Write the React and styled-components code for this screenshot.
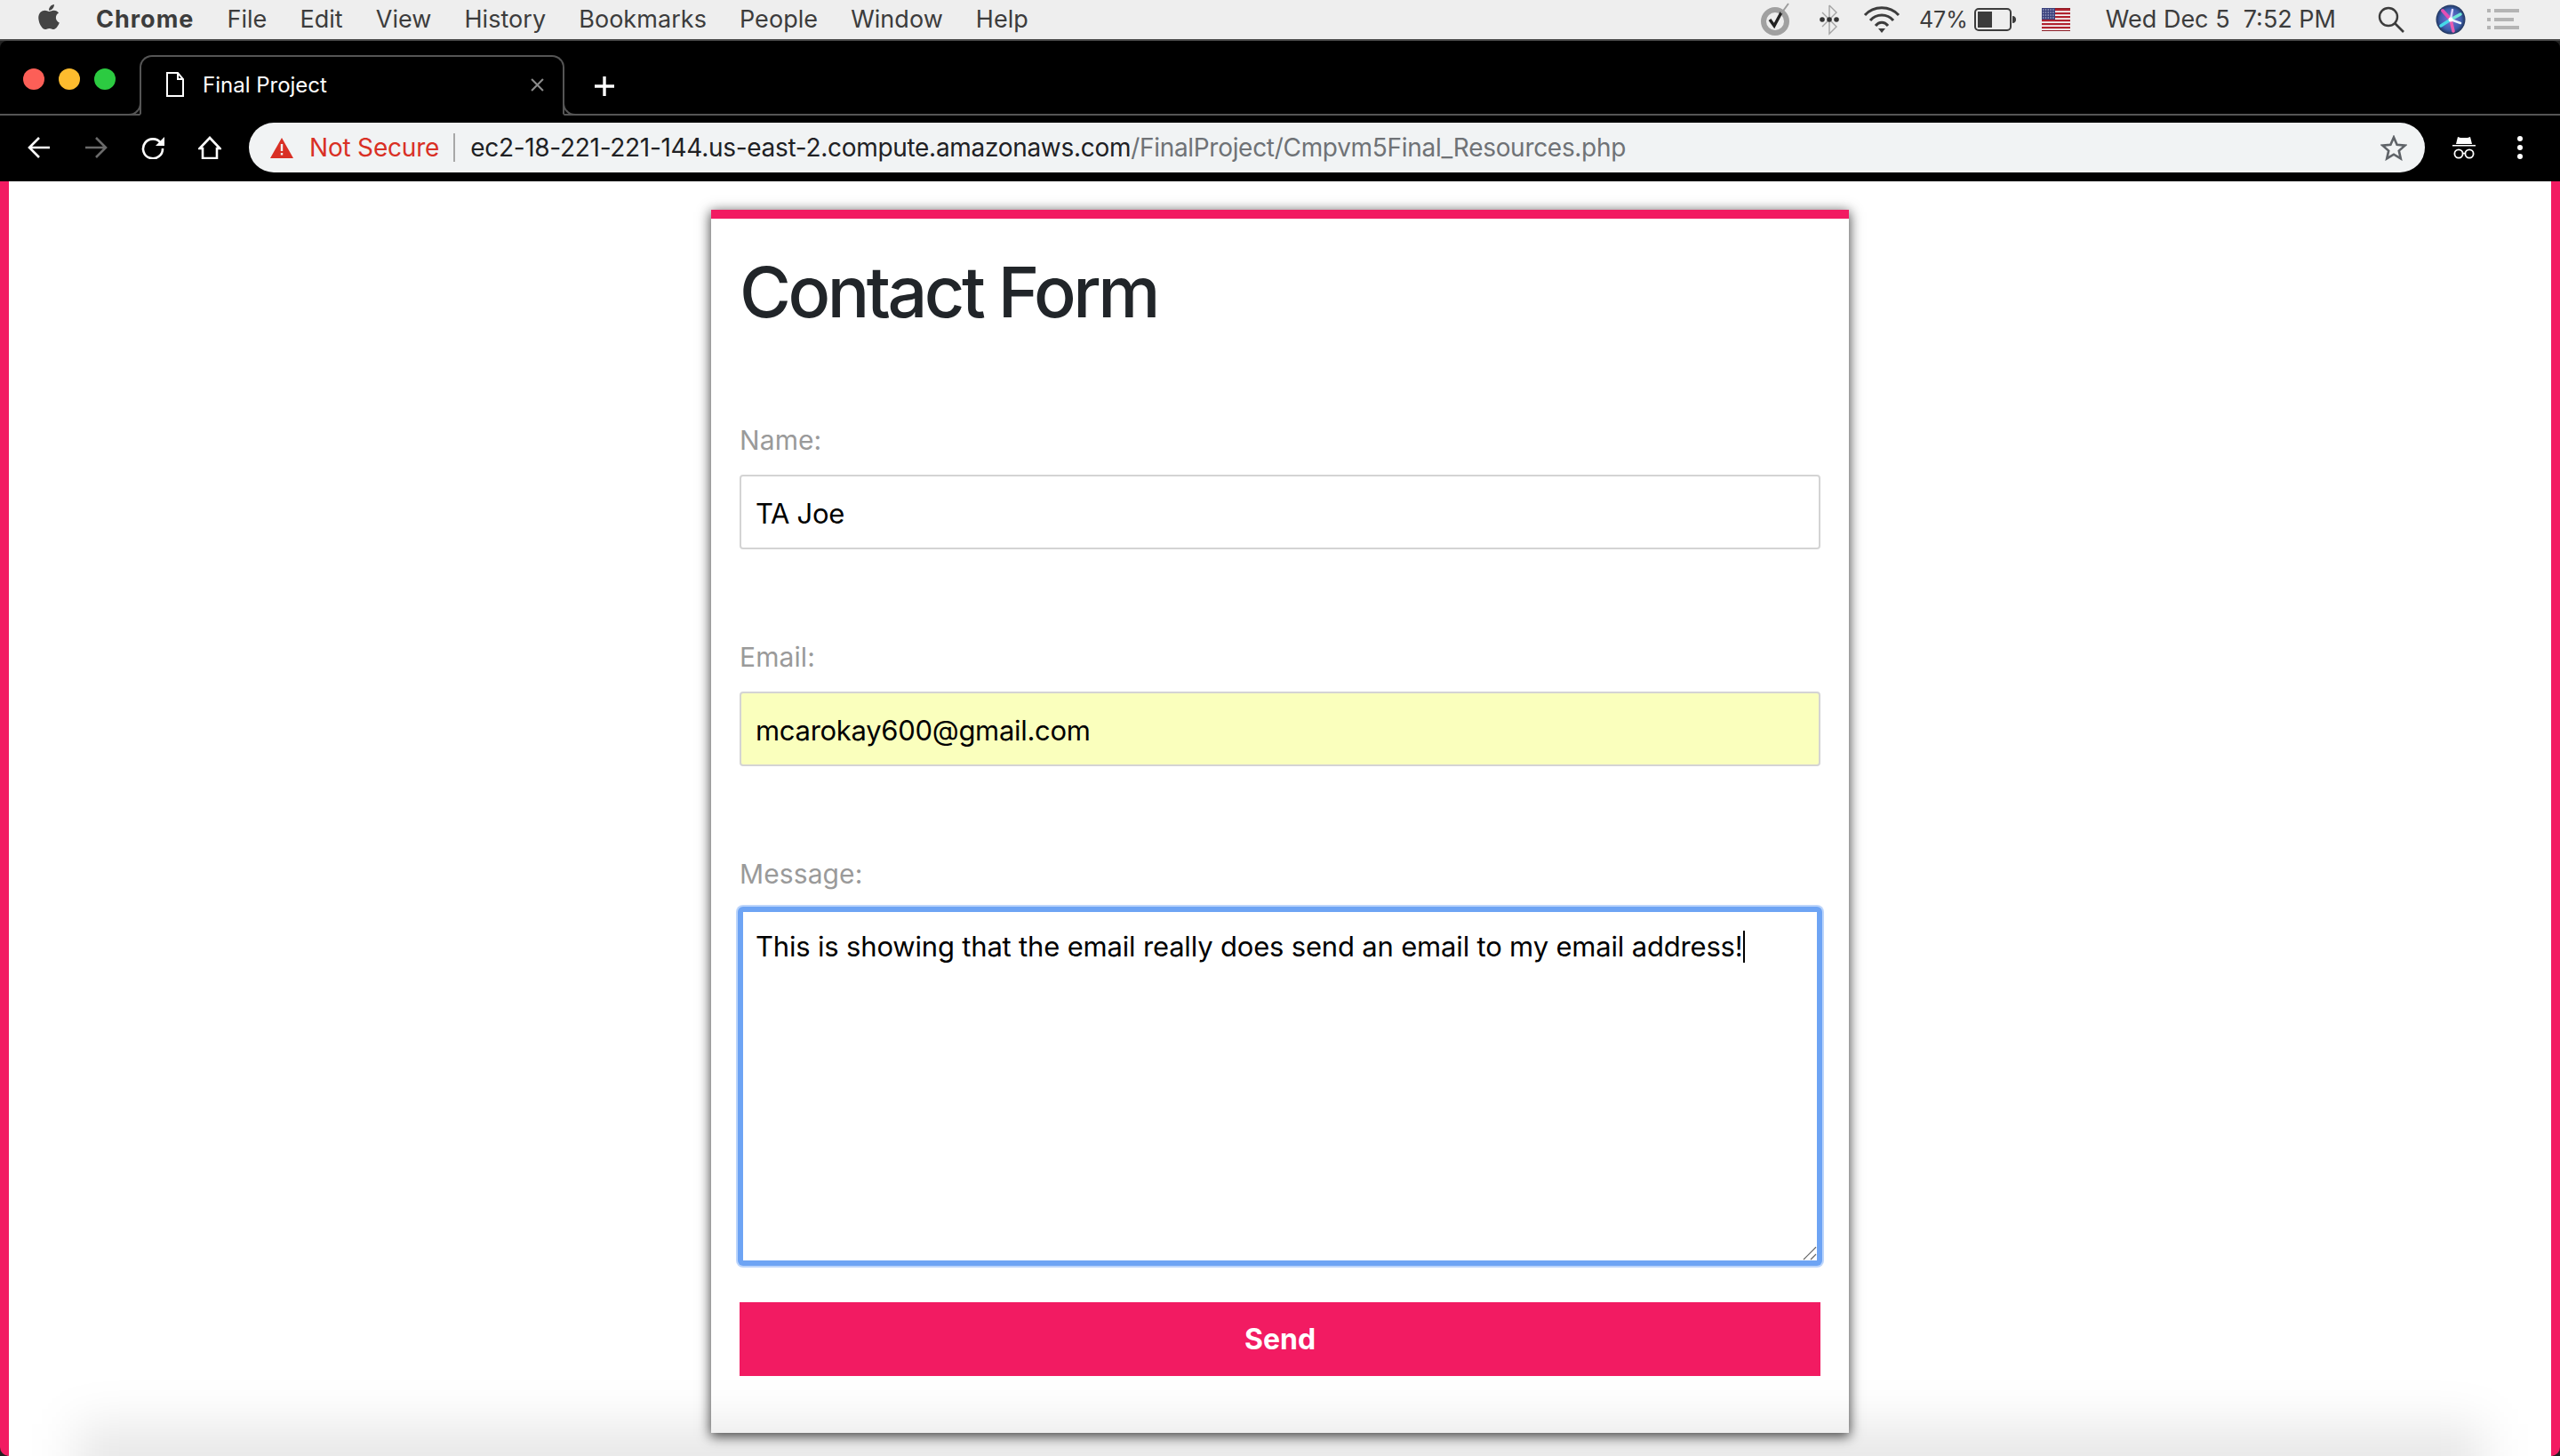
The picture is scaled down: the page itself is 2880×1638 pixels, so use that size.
import React from 'react';
import styled, { createGlobalStyle } from 'styled-components';
import { FaApple } from 'react-icons/fa';

const GlobalStyle = createGlobalStyle`
  html, body { margin: 0; padding: 0; background: #fff; }
  body { font-family: Inter, "Liberation Sans", sans-serif; }
  * { box-sizing: border-box; }
`;

const PINK = '#f21b62';

const Screen = styled.div`
  position: relative;
  width: 2880px;
  height: 1638px;
  overflow: hidden;
  display: flex;
  flex-direction: column;
  background: #222;
`;

/* mac menu bar */
const MenuBar = styled.div`
  height: 46px;
  flex: none;
  display: flex;
  align-items: center;
  justify-content: space-between;
  background: #eeeeee;
  border-bottom: 2px solid #4a4a4a;
  color: #3c3c3c;
  font-size: 27px;
  padding: 0 46px 1px 40px;
`;

const MenuLeft = styled.div`
  display: flex;
  align-items: center;
  gap: 37px;
`;

const AppleMark = styled(FaApple)`
  width: 30px;
  height: 32px;
  color: #444;
  margin-right: 1px;
  margin-top: -6px;
`;

const MenuItem = styled.span`
  font-weight: ${p => (p.$bold ? 700 : 400)};
  letter-spacing: ${p => (p.$bold ? 1 : 0.05)}px;
`;

const MenuRight = styled.div`
  display: flex;
  align-items: center;
`;

const Status = styled.span`
  display: flex;
  align-items: center;
  margin-left: ${p => p.$gap}px;
  font-size: ${p => p.$size || 27}px;
  white-space: pre;
`;

/* browser chrome */
const Browser = styled.div`
  flex: none;
  height: 158px;
  background: #000;
  border-radius: 8px 8px 0 0;
  display: flex;
  flex-direction: column;
`;

const TabStrip = styled.div`
  height: 84px;
  flex: none;
  display: flex;
  align-items: flex-end;
  border-bottom: 2px solid #555;
`;

const Lights = styled.div`
  width: 157px;
  height: 82px;
  flex: none;
  display: flex;
  gap: 16px;
  padding: 31px 0 0 26px;
`;

const Light = styled.span`
  width: 24px;
  height: 24px;
  border-radius: 50%;
  background: ${p => p.$color};
`;

const Tab = styled.div`
  position: relative;
  width: 478px;
  height: 68px;
  margin-bottom: -2px;
  flex: none;
  display: flex;
  align-items: center;
  padding: 0 0 2px 28px;
  background: #000;
  border: 2px solid #555;
  border-bottom: 2px solid #000;
  border-radius: 14px 14px 0 0;
  color: #fff;
  font-size: 24px;

  &::before, &::after {
    content: '';
    position: absolute;
    bottom: -2px;
    width: 14px;
    height: 14px;
    border-bottom: 2px solid #555;
  }
  &::before {
    left: -16px;
    border-right: 2px solid #555;
    border-radius: 0 0 14px 0;
  }
  &::after {
    right: -16px;
    border-left: 2px solid #555;
    border-radius: 0 0 0 14px;
  }
`;

const TabTitle = styled.span`
  margin-left: 21px;
  flex: 1;
`;

const TabClose = styled.svg`
  width: 15px;
  height: 15px;
  margin-right: 21px;
`;

const NewTab = styled.svg`
  width: 24px;
  height: 24px;
  margin: 0 0 19px 33px;
`;

const Toolbar = styled.div`
  flex: 1;
  display: flex;
  align-items: center;
  padding: 0 30px 2px 31px;
`;

const NavIcon = styled.svg`
  width: 26px;
  height: 26px;
  flex: none;
  margin-right: ${p => p.$right}px;
`;

const Omnibox = styled.div`
  flex: none;
  width: 2448px;
  height: 56px;
  border-radius: 28px;
  background: #f1f3f4;
  display: flex;
  align-items: center;
  padding: 0 20px 0 24px;
  font-size: 28px;
`;

const NotSecure = styled.span`
  color: #d93025;
  margin-left: 18px;
  padding-right: 16px;
  border-right: 2px solid #a8a8a8;
  line-height: 32px;
  letter-spacing: -0.2px;
`;

const Url = styled.span`
  flex: 1;
  margin-left: 17px;
  color: #202124;
  letter-spacing: -0.3px;
`;

const UrlPath = styled.span`
  color: #6f7276;
`;

const ToolIcon = styled.svg`
  flex: none;
  margin-left: ${p => p.$left}px;
`;

/* page */
const Page = styled.div`
  flex: 1;
  min-height: 0;
  background: #fff;
  border-left: 10px solid ${PINK};
  border-right: 10px solid ${PINK};
  border-radius: 0 0 10px 10px;
  padding-top: 32px;
`;

const Card = styled.div`
  width: 1280px;
  height: 1376px;
  margin: 0 auto;
  background: #fff;
  border-top: 10px solid ${PINK};
  padding: 34px 32px 0;
  box-shadow: 0 3px 13px 1px rgba(0, 0, 0, 0.72);
`;

const Title = styled.h1`
  margin: 0 0 97px;
  height: 96px;
  font-size: 79px;
  line-height: 96px;
  font-weight: 500;
  color: #212529;
  letter-spacing: -3.5px;
`;

const Group = styled.div`
  margin-bottom: ${p => p.$bottom}px;
`;

const Label = styled.div`
  height: 44px;
  margin-bottom: 17px;
  font-size: 30px;
  line-height: 44px;
  color: #9a9a9a;
  letter-spacing: 0.1px;
`;

const Field = styled.div`
  height: 84px;
  padding: 2px 16px 0;
  display: flex;
  align-items: center;
  background: ${p => p.$bg || '#fff'};
  border: 2px solid #d4d4d4;
  border-radius: 4px;
  font-size: 31px;
  color: #000;
  letter-spacing: -0.3px;
`;

const MessageBox = styled.div`
  position: relative;
  height: 400px;
  padding: 19px 14px;
  background: #fff;
  border: 4px solid #6ea4f4;
  border-radius: 4px;
  box-shadow: 0 0 0 2px #6ea4f4, 0 0 0 4px #bcd5fb;
  font-size: 31px;
  line-height: 40px;
  color: #000;
  letter-spacing: -0.18px;
`;

const Caret = styled.span`
  display: inline-block;
  width: 2px;
  height: 36px;
  background: #000;
  vertical-align: -7px;
`;

const Grip = styled.svg`
  position: absolute;
  right: 0;
  bottom: 0;
  width: 16px;
  height: 16px;
`;

const SendButton = styled.button`
  display: block;
  width: 100%;
  height: 83px;
  border: 0;
  padding: 0;
  background: ${PINK};
  color: #fff;
  font-family: inherit;
  font-size: 32px;
  font-weight: 700;
`;

/* soft shadow the dock leaves at the bottom of the screen */
const DockShade = styled.div`
  position: absolute;
  left: 85px;
  right: 85px;
  bottom: -60px;
  height: 96px;
  background: rgba(0, 0, 0, 0.09);
  filter: blur(26px);
  pointer-events: none;
`;

const Siri = () => (
  <svg width="34" height="34" viewBox="0 0 34 34">
    <defs>
      <radialGradient id="siriBg" cx="50%" cy="50%" r="55%">
        <stop offset="0%" stopColor="#7f6fd8" />
        <stop offset="65%" stopColor="#3d5fae" />
        <stop offset="100%" stopColor="#16263f" />
      </radialGradient>
    </defs>
    <circle cx="17" cy="17" r="16.5" fill="url(#siriBg)" />
    <path d="M17 17L8 7" stroke="#e34fb4" strokeWidth="4" strokeLinecap="round" />
    <path d="M17 17L20 30" stroke="#e85cb0" strokeWidth="3.5" strokeLinecap="round" />
    <path d="M17 17L6 24" stroke="#45d9e8" strokeWidth="3.5" strokeLinecap="round" />
    <path d="M17 17L28 11" stroke="#6fe7d8" strokeWidth="3.5" strokeLinecap="round" />
    <path d="M17 17L19 6" stroke="#d9d4ff" strokeWidth="2.5" strokeLinecap="round" />
    <path d="M17 17L28 21" stroke="#e8f4ff" strokeWidth="2.5" strokeLinecap="round" />
    <circle cx="17" cy="17" r="2.5" fill="#fff" />
  </svg>
);

const Flag = () => (
  <svg width="32" height="26" viewBox="0 0 32 26">
    <rect width="32" height="26" fill="#f4f4f4" />
    {[0, 4, 8, 12, 16, 20].map(y => (
      <rect key={y} y={y + 1} width="32" height="2.2" fill="#b0222e" />
    ))}
    <rect y="0" width="32" height="1" fill="#8c1b25" />
    <rect y="25" width="32" height="1" fill="#8c1b25" />
    <rect width="15" height="13" fill="#39407c" />
    {[2, 5, 8, 11].map(y => (
      <path key={y} d={`M1 ${y}h13`} stroke="#d8daea" strokeWidth="1" strokeDasharray="1.4 1.4" />
    ))}
  </svg>
);

const menus = ['File', 'Edit', 'View', 'History', 'Bookmarks', 'People', 'Window', 'Help'];

export default function App() {
  return (
    <Screen>
      <GlobalStyle />
      <MenuBar>
        <MenuLeft>
          <AppleMark />
          <MenuItem $bold>Chrome</MenuItem>
          {menus.map(m => <MenuItem key={m}>{m}</MenuItem>)}
        </MenuLeft>
        <MenuRight>
          <Status $gap={0}>
            <svg width="38" height="38" viewBox="0 0 38 38">
              <circle cx="17" cy="21" r="13" fill="none" stroke="#a0a0a0" strokeWidth="6" />
              <path d="M11 19l5 7 8-15" fill="none" stroke="#222" strokeWidth="3.4" />
              <path d="M24 12l8-11" stroke="#9d9d9d" strokeWidth="2" />
            </svg>
          </Status>
          <Status $gap={28}>
            <svg width="24" height="36" viewBox="0 0 24 36">
              <path d="M12 2v32l8-8-16-16M12 2l8 8-16 16" fill="none" stroke="#a4a4a4" strokeWidth="1.4" />
              <circle cx="4" cy="18" r="2.8" fill="#333" />
              <circle cx="12" cy="18" r="2.8" fill="#333" />
              <circle cx="20" cy="18" r="2.8" fill="#333" />
            </svg>
          </Status>
          <Status $gap={26}>
            <svg width="42" height="32" viewBox="0 0 42 32">
              <path d="M2 11C12 0 30 0 40 11" fill="none" stroke="#3c3c3c" strokeWidth="3" />
              <path d="M8 17C15 9 27 9 34 17" fill="none" stroke="#3c3c3c" strokeWidth="3" />
              <path d="M14 23C18 18 24 18 28 23" fill="none" stroke="#3c3c3c" strokeWidth="3" />
              <path d="M17 26h8l-4 5z" fill="#3c3c3c" />
            </svg>
          </Status>
          <Status $gap={21} $size={25}>47%</Status>
          <Status $gap={7}>
            <svg width="48" height="28" viewBox="0 0 48 28">
              <rect x="1" y="2" width="40" height="24" rx="4" fill="none" stroke="#3c3c3c" strokeWidth="2" />
              <rect x="4" y="5" width="16" height="18" fill="#3c3c3c" />
              <path d="M43 10c3 0 4 2 4 4s-1 4-4 4z" fill="#3c3c3c" />
            </svg>
          </Status>
          <Status $gap={28}><Flag /></Status>
          <Status $gap={40} $size={27}>Wed Dec 5  7:52 PM</Status>
          <Status $gap={46}>
            <svg width="32" height="32" viewBox="0 0 32 32">
              <circle cx="13" cy="13" r="10" fill="none" stroke="#3c3c3c" strokeWidth="2.4" />
              <path d="M20 20l10 10" stroke="#3c3c3c" strokeWidth="2.6" />
            </svg>
          </Status>
          <Status $gap={34}><Siri /></Status>
          <Status $gap={24}>
            <svg width="36" height="26" viewBox="0 0 36 26">
              <path d="M0 1h4v4H0zM8 1h28v4H8zM0 11h4v4H0zM8 11h22v4H8zM0 20h4v4H0zM8 20h28v4H8z" fill="#b4b4b4" />
            </svg>
          </Status>
        </MenuRight>
      </MenuBar>

      <Browser>
        <TabStrip>
          <Lights>
            <Light $color="#fc5f57" />
            <Light $color="#fdbc2e" />
            <Light $color="#2ccb41" />
          </Lights>
          <Tab>
            <svg width="20" height="28" viewBox="0 0 20 28">
              <path d="M1 1h12l6 7v19H1z M13 1v7h6" fill="none" stroke="#fff" strokeWidth="2" />
            </svg>
            <TabTitle>Final Project</TabTitle>
            <TabClose viewBox="0 0 14 14">
              <path d="M1 1l12 12M13 1L1 13" stroke="#8a8a8a" strokeWidth="2" />
            </TabClose>
          </Tab>
          <NewTab viewBox="0 0 24 24">
            <path d="M12 1v22M1 12h22" stroke="#fff" strokeWidth="3.4" />
          </NewTab>
        </TabStrip>
        <Toolbar>
          <NavIcon $right={38} viewBox="0 0 26 26">
            <path d="M25 13H3M13 2L2 13l11 11" fill="none" stroke="#fff" strokeWidth="2.6" />
          </NavIcon>
          <NavIcon $right={38} viewBox="0 0 26 26">
            <path d="M1 13h22M13 2l11 11-11 11" fill="none" stroke="#6a6a6a" strokeWidth="2.6" />
          </NavIcon>
          <NavIcon $right={38} viewBox="0 0 26 26">
            <path d="M22 8A11 11 0 1 0 24 14" fill="none" stroke="#fff" strokeWidth="2.6" />
            <path d="M26 1v10H16z" fill="#fff" />
          </NavIcon>
          <NavIcon $right={31} viewBox="0 0 26 26">
            <path d="M13 2L1.5 14H5v11h16V14h3.5zM7.5 12.5" fill="none" stroke="#fff" strokeWidth="2.6" />
          </NavIcon>
          <Omnibox>
            <svg width="26" height="24" viewBox="0 0 26 24">
              <path d="M13 1L26 24H0z" fill="#d93025" />
              <path d="M11.8 8h2.4v8h-2.4zM11.8 18h2.4v2.4h-2.4z" fill="#f1f3f4" />
            </svg>
            <NotSecure>Not Secure</NotSecure>
            <Url>
              ec2-18-221-221-144.us-east-2.compute.amazonaws.com
              <UrlPath>/FinalProject/Cmpvm5Final_Resources.php</UrlPath>
            </Url>
            <svg width="30" height="29" viewBox="0 0 30 29">
              <path d="M15 2.5l3.6 8.3 9 .8-6.8 6 2 8.8-7.8-4.7-7.8 4.7 2-8.8-6.8-6 9-.8z" fill="none" stroke="#5f6368" strokeWidth="2.6" />
            </svg>
          </Omnibox>
          <ToolIcon $left={30} width="28" height="26" viewBox="0 0 28 26">
            <path d="M7 1l3 1h8l3-1 2 8H5zM1 10h26v1.6H1z" fill="#fff" />
            <circle cx="8" cy="20" r="4.6" fill="none" stroke="#fff" strokeWidth="1.8" />
            <circle cx="20" cy="20" r="4.6" fill="none" stroke="#fff" strokeWidth="1.8" />
            <path d="M12.5 19.5h3" stroke="#fff" strokeWidth="1.6" />
          </ToolIcon>
          <ToolIcon $left={46} width="6" height="26" viewBox="0 0 6 26">
            <circle cx="3" cy="3" r="3" fill="#fff" />
            <circle cx="3" cy="13" r="3" fill="#fff" />
            <circle cx="3" cy="23" r="3" fill="#fff" />
          </ToolIcon>
        </Toolbar>
      </Browser>

      <Page>
        <Card>
          <Title>Contact Form</Title>
          <Group $bottom={99}>
            <Label>Name:</Label>
            <Field>TA Joe</Field>
          </Group>
          <Group $bottom={99}>
            <Label>Email:</Label>
            <Field $bg="#faffbd">mcarokay600@gmail.com</Field>
          </Group>
          <Group $bottom={43}>
            <Label>Message:</Label>
            <MessageBox>
              This is showing that the email really does send an email to my email address!<Caret />
              <Grip viewBox="0 0 16 16">
                <path d="M1 15L15 1M9 15l6-6" stroke="#666" strokeWidth="1.2" />
              </Grip>
            </MessageBox>
          </Group>
          <SendButton>Send</SendButton>
        </Card>
      </Page>
      <DockShade />
    </Screen>
  );
}
